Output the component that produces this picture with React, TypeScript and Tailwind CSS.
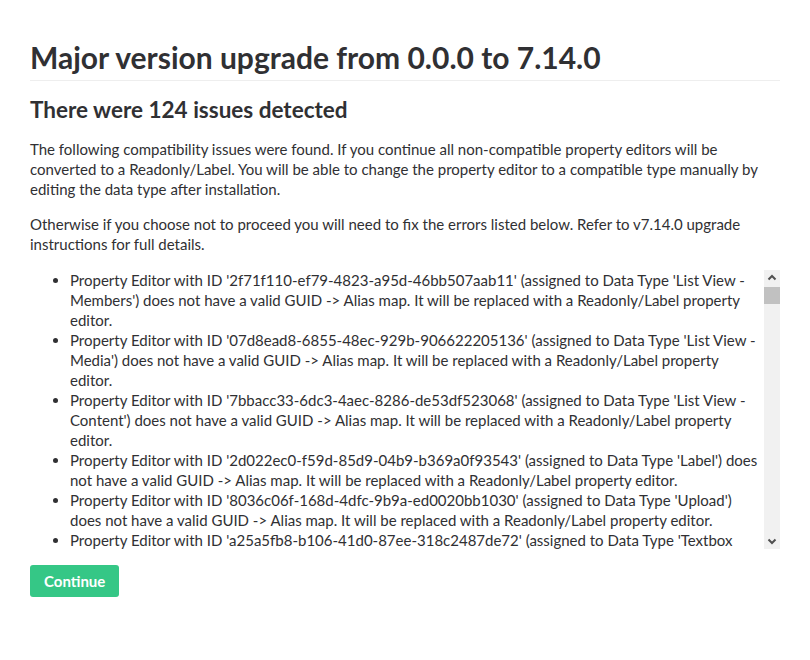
import React from "react";

const items: [string, string][] = [
  ["2f71f110-ef79-4823-a95d-46bb507aab11", "List View - Members"],
  ["07d8ead8-6855-48ec-929b-906622205136", "List View - Media"],
  ["7bbacc33-6dc3-4aec-8286-de53df523068", "List View - Content"],
  ["2d022ec0-f59d-85d9-04b9-b369a0f93543", "Label"],
  ["8036c06f-168d-4dfc-9b9a-ed0020bb1030", "Upload"],
  ["a25a5fb8-b106-41d0-87ee-318c2487de72", "Textbox multiple"],
];

function Chevron({ up }: { up?: boolean }) {
  return (
    <svg width="16" height="15" viewBox="0 0 16 15">
      {up ? (
        <path d="M4.5 9.5 L8 6 L11.5 9.5" fill="none" stroke="#505050" strokeWidth="2" />
      ) : (
        <path d="M4.5 5.5 L8 9 L11.5 5.5" fill="none" stroke="#505050" strokeWidth="2" />
      )}
    </svg>
  );
}

export default function App() {
  return (
    <div
      className="bg-white text-[#303033] px-[30px]"
      style={{ fontFamily: "Lato, 'Open Sans', sans-serif" }}
    >
      <h1 className="text-[30px] leading-[36px] font-bold pt-[39px] pb-[5px] border-b border-[#eeeeee]">
        Major version upgrade from 0.0.0 to 7.14.0
      </h1>
      <h2 className="text-[22.5px] leading-[28px] font-bold mt-[15px]">
        There were 124 issues detected
      </h2>
      <p className="text-[15px] leading-[20px] mt-[15px]">
        The following compatibility issues were found. If you continue all non-compatible property editors will be
        converted to a Readonly/Label. You will be able to change the property editor to a compatible type manually by
        editing the data type after installation.
      </p>
      <p className="text-[15px] leading-[20px] mt-[15px]">
        Otherwise if you choose not to proceed you will need to fix the errors listed below. Refer to v7.14.0 upgrade
        instructions for full details.
      </p>
      <div className="mt-[16px] h-[280px] flex">
        <div className="flex-1 min-w-0 overflow-hidden">
          <ul className="list-disc pl-[40px] text-[15px] leading-[20px]">
            {items.map(([g, n], i) => (
              <li key={i}>
                Property Editor with ID '{g}' (assigned to Data Type '{n}') does not have a valid GUID -&gt; Alias map.
                It will be replaced with a Readonly/Label property editor.
              </li>
            ))}
          </ul>
        </div>
        <div className="w-[16px] h-[279px] bg-[#f1f1f1] flex flex-col">
          <div className="h-[15px] flex items-center justify-center">
            <Chevron up />
          </div>
          <div className="mt-[2px] h-[17px] bg-[#c1c1c1]" />
          <div className="flex-1" />
          <div className="h-[15px] flex items-center justify-center">
            <Chevron />
          </div>
        </div>
      </div>
      <button className="mt-[15px] h-[32px] px-[14px] rounded-[3px] bg-[#35c786] text-white font-bold text-[15px] leading-[20px]">
        Continue
      </button>
    </div>
  );
}
